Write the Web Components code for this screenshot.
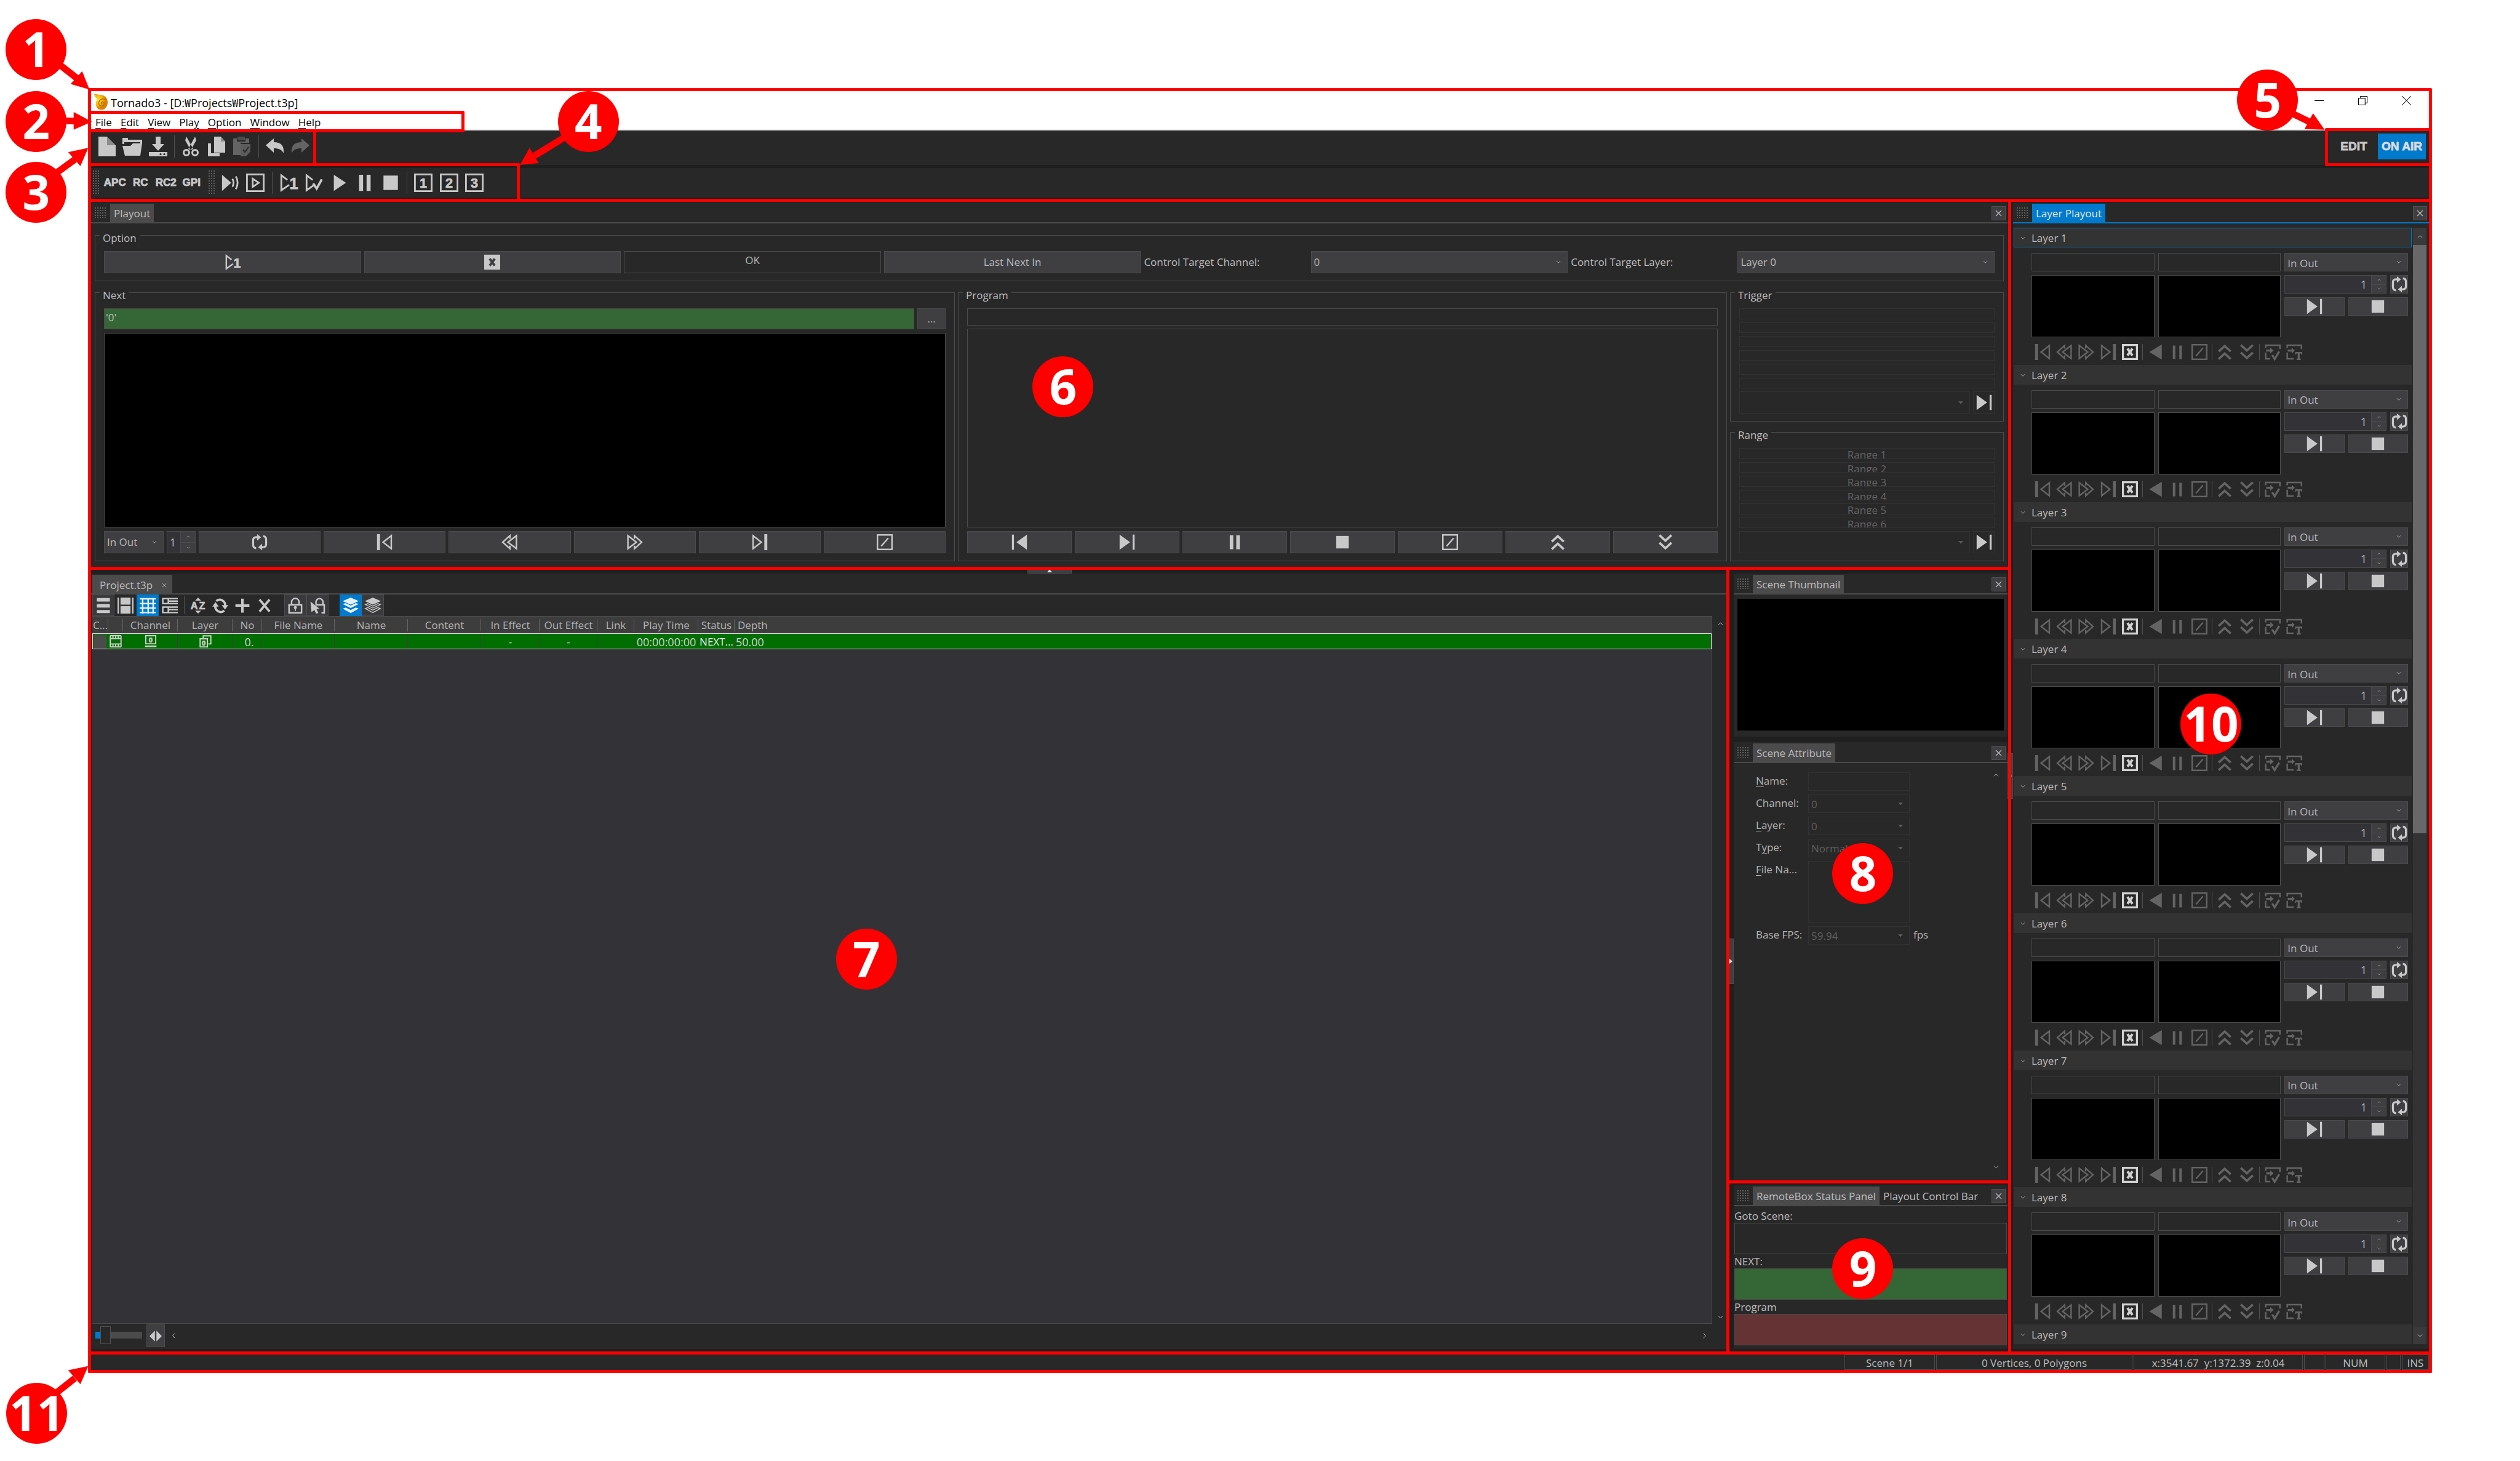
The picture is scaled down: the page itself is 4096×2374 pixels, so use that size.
<!DOCTYPE html>
<html lang="en">
<head>
<meta charset="utf-8">
<title>Tornado3</title>
<style>
  html, body { margin: 0; height: 100%; background: #fff; }
  body { font-family: "Open Sans", "Noto Sans CJK KR", sans-serif; font-size: 17px; line-height: 22px; }
  manual-page { height: 100%; }
</style>
</head>
<body>
<manual-page></manual-page>
<script>
const BASE = `
  *, *::before, *::after { box-sizing: border-box; }
  :host { display: block; box-sizing: border-box; min-width: 0; min-height: 0; }
  button, input, select, textarea { font: inherit; color: inherit; margin: 0; padding: 0; border: 0; background: none; border-radius: 0; outline: 0; min-width: 0; }
`;
function define(name, css, render) {
  customElements.define(name, class extends HTMLElement {
    constructor() {
      super();
      this.attachShadow({ mode: 'open' });
    }
    connectedCallback() {
      const html = typeof render === 'function' ? render(this) : render;
      this.shadowRoot.innerHTML = '<style>' + BASE + css + '</style>' + html;
    }
  });
}

/* ---------- icons, all on a 32 x 32 grid ---------- */
const num = (x, y, size, t) => `<text x="${x}" y="${y}" font-family="Liberation Sans" font-weight="700" font-size="${size}" text-anchor="middle" stroke="currentColor" stroke-width=".8">${t}</text>`;
const BOX = '<rect class="s" x="1.5" y="1.5" width="29" height="29"/>';
const PLAYOPEN = '<path class="s" d="M14 11L3.500 3V29L17 19.500"/>';
const STACK = 'M16 0L32 7L16 14L0 7z';
const ICONS = {
  new: '<path d="M2 0H16V14H30V32H2z"/><path fill="#8c8c8c" d="M16 0L30 14H16z"/>',
  open: '<path d="M0 2h9v3h23v7h-3V9H3v3H0z"/><path d="M0 15h13l4-4h15l-3 20H4z"/>',
  save: '<path d="M12 0h8v12h6L16 23L6 12h6z"/><path d="M1 25h30v7H1z"/><circle cx="20" cy="28.500" r="1.600" fill="#282828"/><circle cx="26" cy="28.500" r="1.600" fill="#282828"/>',
  cut: '<path d="M9 0L20 20L16 22L7 6zM23 0L12 20L16 22L25 6z"/><circle class="s" cx="9" cy="26" r="4.500"/><circle class="s" cx="23" cy="26" r="4.500"/>',
  copy: '<path d="M12 0h11l7 8v18H12z"/><path fill="#8c8c8c" d="M23 0l7 8h-7z"/><path d="M2 11h5v16h14v5H2z"/>',
  paste: '<path d="M2 3h6v5h14V3h6v7H14v20H2z"/><path d="M9 0h12v6H9z" opacity=".6"/><path d="M14 12h16v12l-7 8h-9z" opacity=".85"/><path class="s" style="stroke:#282828;stroke-width:2" d="M18 21l3 4l6-8"/>',
  undo: '<path d="M1 14L14 3v6c12 0 17 6 16 18c-3-6-8-8-16-8v7z"/>',
  redo: '<path d="M31 14L18 3v6C6 9 1 15 2 27c3-6 8-8 16-8v7z"/>',
  onairplay: '<path d="M2 2L18 16L2 30z"/><path class="s" d="M20 9q4 7 0 14M26 5q6 11 0 22"/>',
  boxplay: BOX + '<path class="s" d="M11.500 9L22 16L11.500 23z"/>',
  play1: PLAYOPEN + num(25, 27, 27, '1'),
  playcheck: PLAYOPEN + '<path class="s" style="stroke-width:4" d="M15 17l6 9L30 10"/>',
  play: '<path d="M6 2L27 16L6 30z"/>',
  pause: '<path d="M6 2h7v28H6zM19 2h7v28h-7z"/>',
  pausethin: '<path d="M7 3h5v27H7zM20 3h5v27h-5z"/>',
  stop: '<path d="M3.500 3.500h25v25h-25z"/>',
  box1: BOX + num(16, 24.500, 23, '1'),
  box2: BOX + num(16, 24.500, 23, '2'),
  box3: BOX + num(16, 24.500, 23, '3'),
  xfill: '<path d="M0 1h32v30H0z"/><path d="M11 9l10 14M21 9L11 23" stroke="#3f3f42" stroke-width="5"/>',
  xbox: '<rect class="s" style="stroke-width:4" x="2" y="2" width="28" height="28"/><path class="s" style="stroke-width:5" d="M11 9l10 14M21 9L11 23"/>',
  loop: '<path class="s" style="stroke-width:4" d="M9 28Q3 28 3 21V12Q3 6 9 6H12M23 4Q29 4 29 11V20Q29 26 23 26H20"/><path d="M11 0L19 6L11 13zM21 32L13 26L21 19z"/>',
  prevo: '<path d="M1 0h6v32H1z"/><path class="s" d="M29.500 3V29L13 16z"/>',
  nexto: '<path d="M25 0h6v32h-6z"/><path class="s" d="M2.500 3V29L19 16z"/>',
  rewo: '<path class="s" d="M17 9V3L2.500 16L17 29V23M30 3V29L13 16z"/>',
  fwdo: '<path class="s" d="M15 9V3L29.500 16L15 29V23M2 3V29L19 16z"/>',
  prevf: '<path d="M1 1h4v30H1zM31 1V31L10 16z"/>',
  nextf: '<path d="M27 1h4v30h-4zM1 1V31L22 16z"/>',
  back: '<path d="M28 1V31L3 16z"/>',
  slash: BOX + '<path class="s" d="M9 24L23 8"/>',
  up2: '<path class="s" style="stroke-width:4.500" d="M4 15L16 4L28 15M4 30L16 19L28 30"/>',
  down2: '<path class="s" style="stroke-width:4.500" d="M4 2L16 13L28 2M4 17L16 28L28 17"/>',
  incheck: '<path class="s" d="M30.500 10V2.500H2V8M2 17V29.500H11"/><path d="M3 11h8V7l7 6l-7 6v-4H3z"/><path class="s" style="stroke-width:4" d="M15 22l5 8L29 15"/>',
  intext: '<path class="s" d="M30.500 10V2.500H2V8M2 17V29.500H15"/><path d="M3 11h8V7l6 6l-6 6v-4H3z"/><path d="M18 16h14v5h-2v-2h-3v10h2v3h-8v-3h2V19h-3v2h-2z"/>',
  menu: '<path d="M3 1h26v7H3zM3 13h26v7H3zM3 25h26v6H3z"/>',
  film: '<path d="M0 0h3v32H0zM29 0h3v32h-3zM6 0h20v14H6zM6 17h20v15H6z"/>',
  grid: '<path class="s" d="M0 2.500H32M0 12H32M0 21H32M0 30H32M6 1V32M17 1V32M27 1V32"/>',
  details: '<path class="s" d="M32 2H2V12H32M13 2V12M13 7H32M32 19H2V30H32M13 19V30M13 24H32"/>',
  az: num(8, 23, 20, 'A') + num(24, 23, 20, 'Z') + '<path d="M16 0l6 6H10zM16 32l6-6H10z"/>',
  refresh: '<path class="s" style="stroke-width:4.500" d="M8 7A11 12 0 0 1 26 16M24 26A11 12 0 0 1 6 16"/><path d="M19 15h13L25.500 24zM0 18h13L6.500 9z"/>',
  plus: '<path d="M13.500 2h5v11.500H30v5H18.500V30h-5V18.500H2v-5H13.500z"/>',
  cross: '<path class="s" style="stroke-width:4.500" d="M6 4L26 28M26 4L6 28"/>',
  lock: '<path class="s" d="M3.500 14.500h25v16h-25zM8.500 14V9a7.500 7.500 0 0 1 15 0v5"/><circle cx="16" cy="20" r="3"/><path d="M15 20h2v7h-2z"/>',
  lockcur: '<path class="s" d="M12 14.500H29.500v16H24M13 13V9a7 7 0 0 1 14 0v5"/><path d="M2 8L20 22L14 23L18 31L13 32L10 25L4 29z"/>',
  layers: `<path d="${STACK}"/><path d="M0 13l6-2l10 5l10-5l6 2l-16 8zM0 22l6-2l10 5l10-5l6 2l-16 9z"/>`,
  layersoff: `<path d="${STACK}"/><path class="s" style="stroke-width:1.800" d="M6 12l-5 2l15 7l15-7l-5-2l-10 5zM6 20l-5 2l15 8l15-8l-5-2l-10 5z"/>`,
  strip: '<path class="s" d="M2 1v30M30 1v30M2 9H30M2 23H30"/><path stroke="currentColor" stroke-width="3" d="M9 1v7M16 1v7M23 1v7M9 24v7M16 24v7M23 24v7M2 1.500H30M2 30.500H30"/>',
  chan: '<path class="s" d="M3 1.500h26v21H3z"/><path d="M1 27h30v4H1z"/>' + num(16, 19, 18, '0'),
  lay: '<path class="s" d="M2 9.500h19v21H2zM10 8V2H30V23H23"/>' + num(11.500, 27, 18, '0'),
  chevdown: '<path class="s" style="stroke-width:3.500" d="M4 9L16 21L28 9"/>',
  chevup: '<path class="s" style="stroke-width:3.500" d="M4 22L16 10L28 22"/>',
  chevleft: '<path class="s" style="stroke-width:3.500" d="M22 2L9 16L22 30"/>',
  chevright: '<path class="s" style="stroke-width:3.500" d="M10 2L23 16L10 30"/>',
  tri: '<path d="M0 9h32L16 25z"/>',
  x: '<path class="s" style="stroke-width:3.500" d="M3 3L29 29M29 3L3 29"/>',
  fit: '<path d="M14 2V30L0 16zM18 2V30L32 16z"/>',
  min: '<path stroke="currentColor" stroke-width="2.200" d="M0 16H32"/>',
  restore: '<path class="s" style="stroke-width:2.200" d="M1 8h23v23H1zM8 8V1h23v23h-7"/>',
  close: '<path class="s" style="stroke-width:2.200" d="M0 0L32 32M32 0L0 32"/>'
};
define('ui-icon', `
  :host { display: inline-block; flex: none; width: 26px; height: 26px; }
  svg { display: block; width: 100%; height: 100%; fill: currentColor; overflow: visible; }
  .s { fill: none; stroke: currentColor; stroke-width: 3; }
`, el => `<svg viewBox="0 0 32 32" aria-hidden="true">${ICONS[el.getAttribute('name')] || ''}</svg>`);

/* ---------- small controls ---------- */
define('push-button', `
  :host { height: 36px; display: block; }
  button { width: 100%; height: 100%; display: flex; align-items: center; justify-content: center; background: #3f3f42; border: 1px solid #4b4b4d; color: #c8c8c8; overflow: hidden; }
  :host([text]) button { color: #b9b9b9; }
  :host([dark]) button { background: #282828; padding-bottom: 6px; }
  :host([ghost]) button { background: none; border-color: #323232; }
  :host([off]) button { background: none; border-color: #323232; color: #646464; align-items: flex-start; line-height: 19px; }
`, el => `<button ${el.hasAttribute('off') ? 'disabled' : ''} aria-label="${el.getAttribute('text') || el.getAttribute('icon') || 'item'}">${el.getAttribute('text') || (el.hasAttribute('icon') ? `<ui-icon name="${el.getAttribute('icon')}"></ui-icon>` : '')}</button>`);

define('combo-box', `
  :host { display: grid; height: 36px; color: #b9b9b9; }
  select, ui-icon { grid-area: 1 / 1; }
  select { appearance: none; width: 100%; height: 100%; padding: var(--text-drop, 0) 4px 0; background: #3f3f42; border: 1px solid #4b4b4d; opacity: 1; }
  ui-icon { width: 8px; height: 8px; justify-self: end; align-self: center; margin-right: 11px; pointer-events: none; }
  :host([off]) { color: #5f5f5f; }
  :host([off]) select { background: none; border-color: #323232; color: #5f5f5f; }
`, el => `<select aria-label="${el.getAttribute('label')}" ${el.hasAttribute('off') ? 'disabled' : ''}><option>${el.getAttribute('value') || ''}</option></select><ui-icon name="${el.hasAttribute('off') ? 'tri' : 'chevdown'}"></ui-icon>`);

define('spin-box', `
  :host { display: flex; height: 36px; border: 1px solid #4b4b4d; background: #333337; color: #b9b9b9; }
  input { flex: 1; width: 0; height: 100%; text-align: right; padding-right: 7px; appearance: textfield; font-size: 18px; }
  input::-webkit-inner-spin-button { display: none; }
  div { width: 24px; display: flex; flex-direction: column; background: #3f3f42; border-left: 1px solid #4b4b4d; }
  button { flex: 1; display: flex; align-items: center; justify-content: center; }
  button + button { border-top: 1px solid #4b4b4d; }
  ui-icon { width: 6px; height: 6px; }
`, `<input type="number" value="1" aria-label="Repeat count"><div><button aria-label="Up"><ui-icon name="chevup"></ui-icon></button><button aria-label="Down"><ui-icon name="chevdown"></ui-icon></button></div>`);

define('drag-grip', `
  :host { width: 20px; height: 17px; background-image: radial-gradient(circle at 1px 1px, #5f5f5f 0, #5f5f5f 1px, transparent 1px); background-size: 4px 4px; }
`, '');

/* ---------- panels ---------- */
define('dock-panel', `
  :host { display: flex; flex-direction: column; background: #282828; --line: #4b4b4b; }
  :host([active]) { --line: #007acc; }
  header { flex: none; height: 34px; display: flex; align-items: flex-end; border-bottom: 2px solid var(--line); padding: 0 3px 0 6px; color: #bebebe; }
  drag-grip { margin-right: 5px; align-self: center; }
  .tab { height: 30px; line-height: 28px; padding: 2px 6px 0; white-space: nowrap; }
  .tab.on { background: var(--line); }
  :host([active]) .tab.on { color: #e6e6e6; }
  .x { margin: 0 0 3px auto; width: 23px; height: 23px; background: #3f3f42; border: 1px solid #505052; display: flex; align-items: center; justify-content: center; }
  .x ui-icon { width: 11px; height: 11px; }
  main { flex: 1; min-height: 0; display: flex; flex-direction: column; }
`, el => `<header><drag-grip></drag-grip>${el.getAttribute('tabs').split('|').map((t, i) => `<button class="tab ${i ? '' : 'on'}">${t}</button>`).join('')}<button class="x" aria-label="Close"><ui-icon name="x"></ui-icon></button></header><main><slot></slot></main>`);

define('group-box', `
  :host { display: flex; color: #bebebe; }
  fieldset { flex: 1; min-width: 0; margin: 0; border: 1px solid #4b4b4b; padding: 12px 0; display: flex; flex-direction: column; }
  legend { margin-left: 7px; padding: 10px 5px 0; line-height: 18px; }
  .in { height: 100%; padding: 0 14px; display: flex; flex-direction: column; }
`, el => `<fieldset><legend>${el.getAttribute('caption')}</legend><div class="in"><slot></slot></div></fieldset>`);

define('playout-panel', `
  :host { flex: 1; display: flex; flex-direction: column; padding: 5px 6px 11px; color: #bebebe; }
  .opt { display: grid; grid-template-columns: repeat(4, 422fr) 269fr 422fr 269fr 422fr; gap: 5px; align-items: center; }
  .row { flex: 1; min-height: 0; margin-top: 4px; display: grid; grid-template-columns: 1398fr 1250fr 445fr; gap: 5px; }
  .screen { flex: 1; border: 1px solid #4b4b4b; }
  .black { background: #000; margin: 6px 0; }
  .line { display: flex; gap: 5px; }
  .line > .g { flex: 1; }
  input { width: 100%; background: none; border: 1px solid #4b4b4b; padding: 0 2px; }
  .next { background: #356635; height: 34px; padding-bottom: 6px; flex: 1; color: #b9c4b9; }
  .prog { height: 28px; margin-bottom: 5px; }
  .side { display: flex; flex-direction: column; gap: 3px; }
  .side > group-box { flex: 1; }
  .list { flex: 1; min-height: 0; display: flex; flex-direction: column; gap: 5px; margin-bottom: 5px; }
  .list push-button { flex: 1; height: auto; }
  label { white-space: nowrap; }
`, () => {
  const b = (icons) => icons.map(i => `<push-button class="g" icon="${i}"></push-button>`).join('');
  const side = (cap, txt) => `<group-box caption="${cap}"><div class="list">${[1,2,3,4,5,6].map(i => `<push-button off ${txt ? `text="Range ${i}"` : ''}></push-button>`).join('')}</div><div class="line"><combo-box class="g" off label="${cap}"></combo-box><push-button ghost icon="nextf" style="width:35px"></push-button></div></group-box>`;
  return `
  <group-box caption="Option"><div class="opt">
    <push-button icon="play1"></push-button><push-button icon="xfill"></push-button><push-button dark text="OK"></push-button><push-button text="Last Next In"></push-button>
    <label>Control Target Channel:</label><combo-box label="Control Target Channel" value="0"></combo-box>
    <label>Control Target Layer:</label><combo-box label="Control Target Layer" value="Layer 0"></combo-box>
  </div></group-box>
  <div class="row">
    <group-box caption="Next">
      <div class="line"><input class="next" value="'0'" aria-label="Next scene"><push-button text="..." style="width:46px;height:34px"></push-button></div>
      <div class="screen black"></div>
      <div class="line"><combo-box label="Effect" value="In Out" style="width:97px"></combo-box><spin-box style="width:47px"></spin-box>${b(['loop','prevo','rewo','fwdo','nexto','slash'])}</div>
    </group-box>
    <group-box caption="Program">
      <input class="prog" aria-label="Program scene">
      <div class="screen" style="margin-bottom:6px"></div>
      <div class="line">${b(['prevf','nextf','pause','stop','slash','up2','down2'])}</div>
    </group-box>
    <div class="side">${side('Trigger', false)}${side('Range', true)}</div>
  </div>`;
});

define('scene-table', `
  :host { flex: 1; background: #333337; border: 1px solid #4b4b4b; border-left: 0; margin-left: 2px; overflow: hidden; }
  table { width: 100%; border-collapse: separate; border-spacing: 0; table-layout: fixed; }
  th { font-weight: 400; color: #b4b4b4; background: #3d3d3d; height: 27px; padding: 2px 0 0; text-align: center; white-space: nowrap; overflow: hidden; border-bottom: 1px solid #4b4b4b; background-image: linear-gradient(#646464, #646464); background-size: 1px 20px; background-position: right 4px; background-repeat: no-repeat; }
  th:last-child, td:last-child { text-align: left; padding-left: 2px; }
  th:last-child { background-image: none; padding-left: 5px; }
  td { height: 26px; padding: 2px 0 0; line-height: 22px; font-size: 18px; color: #d2d2d2; background: #006e00; border: 1px solid #dcdcdc; border-width: 1px 0; text-align: center; white-space: nowrap; overflow: hidden; background-image: linear-gradient(#3d3d3d, #3d3d3d); background-size: 1px 100%; background-position: right; background-repeat: no-repeat; }
  td:last-child { border-right-width: 1px; background-image: none; }
  td:first-child { border-left-width: 1px; }
  td.t { font-size: 17px; color: #f0f0f0; }
  td ui-icon { width: 20px; height: 20px; display: block; margin: 0 auto 2px; }
  .sw { width: 21px; height: 22px; margin: -1px auto 0 1px; background: #4b4b4b; }
`, () => {
  const w = [26, 24, 89, 89, 48, 118, 119, 119, 95, 94, 60, 104, 59];
  const h = ['C...', '', 'Channel', 'Layer', 'No', 'File Name', 'Name', 'Content', 'In Effect', 'Out Effect', 'Link', 'Play Time', 'Status', 'Depth'];
  return `<table><colgroup>${w.map(n => `<col style="width:${n}px">`).join('')}<col></colgroup>
  <thead><tr>${h.map(t => `<th>${t}</th>`).join('')}</tr></thead>
  <tbody><tr><td><div class="sw"></div></td><td><ui-icon name="strip"></ui-icon></td><td><ui-icon name="chan"></ui-icon></td><td><ui-icon name="lay"></ui-icon></td><td style="padding-left:6px">0.</td><td></td><td></td><td></td><td>-</td><td>-</td><td></td><td>00:00:00:00</td><td class="t">NEXT...</td><td>50.00</td></tr></tbody></table>`;
});

define('document-pane', `
  :host { display: flex; flex-direction: column; background: #282828; color: #c8c8c8; }
  header { flex: none; height: 34px; display: flex; align-items: flex-end; padding-left: 2px; border-bottom: 2px solid #4b4b4b; }
  .tab { height: 30px; background: #4b4b4b; color: #bebebe; width: 130px; display: flex; align-items: center; justify-content: space-between; padding: 3px 9px 0 12px; }
  .tab ui-icon { width: 8px; height: 8px; }
  nav { flex: none; height: 35px; display: flex; padding-left: 2px; }
  nav button { width: 36px; height: 35px; display: flex; align-items: center; justify-content: center; }
  nav ui-icon { width: 26px; height: 26px; }
  nav .b { background: #3a3a3c; border: 1px solid #4b4b4d; }
  nav .on { background: #007acc; color: #e6f0fa; }
  nav i { border-left: 1px solid #505050; margin: 3px 0 3px 5px; flex: none; width: 5px; }
  .mid { flex: 1; min-height: 0; display: flex; }
  .vs { width: 26px; display: flex; flex-direction: column; align-items: center; justify-content: space-between; padding: 8px 0 6px; }
  .vs ui-icon, .hs ui-icon { width: 9px; height: 9px; }
  footer { flex: none; height: 41px; display: flex; align-items: flex-start; padding: 1px 34px 0 7px; }
  input { appearance: none; width: 76px; height: 30px; margin: 2px 7px 0 0; background: linear-gradient(90deg, #007acc 10px, #4b4b4b 10px) center / 100% 11px no-repeat; }
  input::-webkit-slider-thumb { appearance: none; width: 17px; height: 29px; background: #282828; border: 1px solid #505050; }
  footer button { width: 30px; height: 37px; background: #3f3f42; border: 1px solid #4b4b4d; display: flex; align-items: center; justify-content: center; }
  .hs { flex: 1; height: 37px; display: flex; align-items: center; justify-content: space-between; padding-left: 10px; }
  footer button ui-icon { width: 20px; height: 20px; }
`, () => {
  const b = (n, c = '') => `<button class="${c}" aria-label="${n}"><ui-icon name="${n}"></ui-icon></button>`;
  return `<header><button class="tab">Project.t3p<ui-icon name="x"></ui-icon></button></header>
  <nav>${b('menu','b')}${b('film')}${b('grid','on')}${b('details')}<i></i>${b('az')}${b('refresh')}${b('plus')}${b('cross')}<span style="width:14px"></span>${b('lock','b')}${b('lockcur','b')}<span style="width:18px"></span>${b('layers','on')}${b('layersoff','b')}</nav>
  <div class="mid"><scene-table></scene-table><div class="vs"><ui-icon name="chevup"></ui-icon><ui-icon name="chevdown"></ui-icon></div></div>
  <footer><input type="range" min="0" max="100" value="14" aria-label="Zoom"><button aria-label="Fit"><ui-icon name="fit"></ui-icon></button><div class="hs"><ui-icon name="chevleft"></ui-icon><ui-icon name="chevright"></ui-icon></div></footer>`;
});

define('attribute-form', `
  :host { flex: 1; display: flex; color: #b4b4b4; padding: 15px 14px 16px 36px; }
  form { flex: 1; display: grid; grid-template-columns: 79px 165px 1fr; grid-template-rows: 30px 30px 30px 30px 100px 30px; column-gap: 6px; row-gap: 6px; align-content: start; }
  label, .u { line-height: 28px; white-space: nowrap; }
  label { text-underline-offset: 3px; }
  input, textarea { border: 1px solid #323232; resize: none; }
  combo-box { height: 30px; --text-drop: 2px; }
  .u { grid-column: 3; }
  .c1 { grid-column: 1; }
  .c2 { grid-column: 2; }
  .sb { display: flex; flex-direction: column; justify-content: space-between; }
  .sb ui-icon { width: 9px; height: 9px; }
`, `<form>
  <label class="c1" for="n"><u>N</u>ame:</label><input class="c2" id="n" disabled>
  <label class="c1">Channel:</label><combo-box class="c2" off label="Channel" value="0"></combo-box>
  <label class="c1"><u>L</u>ayer:</label><combo-box class="c2" off label="Layer" value="0"></combo-box>
  <label class="c1">T<u>y</u>pe:</label><combo-box class="c2" off label="Type" value="Normal"></combo-box>
  <label class="c1" for="f"><u>F</u>ile Na...</label><textarea class="c2" id="f" disabled></textarea>
  <label class="c1">Base FPS:</label><combo-box class="c2" off label="Base FPS" value="59.94"></combo-box><span class="u">fps</span>
</form><div class="sb"><ui-icon name="chevup"></ui-icon><ui-icon name="chevdown"></ui-icon></div>`);

define('remote-status', `
  :host { flex: 1; display: flex; flex-direction: column; color: #bebebe; padding: 5px 1px; }
  label { line-height: 22px; height: 22px; }
  input { height: 52px; border: 1px solid #4b4b4b; margin-bottom: 1px; }
  .g { background: #356635; } .r { background: #653333; }
`, `<label for="a">Goto Scene:</label><input id="a"><label for="b">NEXT:</label><input id="b" class="g"><label for="c">Program</label><input id="c" class="r">`);

define('layer-section', `
  :host { flex: 1; color: #bebebe; }
  :host([last]) { flex: none; }
  header { height: 32px; background: #333; border: 1px solid #333; display: flex; align-items: center; padding: 2px 0 0 10px; }
  :host([active]) header { border-color: #007acc; }
  header ui-icon { width: 8px; height: 8px; margin-right: 10px; }
  .grid { display: grid; grid-template-columns: 200fr 200fr 201fr; grid-template-rows: 30px 30px 30px 29px; gap: 6px; padding: 9px 6px 0 29px; }
  input { border: 1px solid #4b4b4b; }
  .v { background: #000; border: 1px solid #4b4b4b; grid-row: 2 / 5; height: 101px; }
  .line { display: flex; gap: 6px; }
  .line > * { flex: 1; }
  combo-box, spin-box, push-button { height: 30px; --text-drop: 3px; }
  .ic { width: 445px; display: flex; margin: 8px 0 0 29px; color: #646464; height: 32px; align-items: center; }
  .ic button { flex: 1; display: flex; justify-content: center; }
  .ic .hot { color: #d2d2d2; }
  .ic i { width: 6px; height: 26px; background: linear-gradient(#505050, #505050) center / 1px 100% no-repeat; }
`, el => {
  const b = (n, c = '') => `<button class="${c}" aria-label="${n}"><ui-icon name="${n}"></ui-icon></button>`;
  const head = `<header><ui-icon name="chevdown"></ui-icon>${el.getAttribute('name')}</header>`;
  if (el.hasAttribute('last')) return head;
  return head + `<div class="grid"><input aria-label="Next name"><input aria-label="Program name"><combo-box label="Effect" value="In Out"></combo-box>
  <div class="v"></div><div class="v"></div>
  <div class="line"><spin-box></spin-box><push-button icon="loop" style="flex:none;width:29px"></push-button></div>
  <div class="line" style="grid-column:3"><push-button icon="nextf"></push-button><push-button icon="stop"></push-button></div></div>
  <div class="ic">${b('prevo')}${b('rewo')}${b('fwdo')}${b('nexto')}${b('xbox','hot')}<i></i>${b('back')}${b('pausethin')}${b('slash')}<i></i>${b('up2')}${b('down2')}<i></i>${b('incheck')}${b('intext')}</div>`;
});

define('layer-list', `
  :host { flex: 1; display: flex; padding: 7px 4px 8px 1px; }
  .l { flex: 1; display: flex; flex-direction: column; }
  .s { width: 22px; margin-left: 2px; background: #333; display: flex; flex-direction: column; color: #bebebe; }
  .s span { height: 28px; display: flex; align-items: center; justify-content: center; background: #3a3a3a; flex: none; }
  .s ui-icon { width: 9px; height: 9px; }
  .s b { height: 956px; background: #686868; margin-bottom: auto; }
`, () => `<div class="l">${[1,2,3,4,5,6,7,8,9].map(i => `<layer-section name="Layer ${i}" ${i === 1 ? 'active' : ''} ${i === 9 ? 'last' : ''}></layer-section>`).join('')}</div>
  <div class="s"><span><ui-icon name="chevup"></ui-icon></span><b></b><span><ui-icon name="chevdown"></ui-icon></span></div>`);

define('title-bar', `
  :host { height: 37px; background: #fff; color: #000; display: flex; align-items: center; padding-left: 4px; font-size: 18px; }
  svg { width: 23px; height: 28px; margin: 0 5px 4px 0; }
  .w { margin-left: auto; display: flex; gap: 56px; padding: 0 29px 7px 0; }
  .w ui-icon { width: 15px; height: 15px; }
  .w button { display: flex; }
`, `<svg viewBox="0 0 24 28"><defs><radialGradient id="g" cx=".35" cy=".4"><stop offset="0" stop-color="#ffe83a"/><stop offset=".6" stop-color="#f9b800"/><stop offset="1" stop-color="#d98200"/></radialGradient></defs><path d="M0 1L7 2L14 3C20 4 24 9 24 15C24 22 20 28 13 28C7 28 4 23 4 18C4 13 6 11 6 9L1 4L4 4z" fill="url(#g)"/><path d="M20 11C15 7 8 12 9 18C10 22 16 23 18 19C19 15 15 13 13 16C13 18 15 18 15 18" fill="none" stroke="#b86a00" stroke-width="1.500"/></svg>
<span>Tornado3 - [D:₩Projects₩Project.t3p]</span>
<div class="w"><button aria-label="Minimize"><ui-icon name="min"></ui-icon></button><button aria-label="Restore"><ui-icon name="restore"></ui-icon></button><button aria-label="Close"><ui-icon name="close"></ui-icon></button></div>`);

define('menu-bar', `
  :host { height: 27px; background: #fff; border-bottom: 2px solid #f0f0f0; color: #000; display: flex; align-items: center; gap: 14px; padding: 3px 0 0 7px; }
  button { text-underline-offset: 3px; }
`, ['<u>F</u>ile', '<u>E</u>dit', '<u>V</u>iew', 'Pla<u>y</u>', '<u>O</u>ption', '<u>W</u>indow', '<u>H</u>elp'].map(t => `<button>${t}</button>`).join(''));

const toolCss = `
  .t { display: flex; align-items: center; }
  .t button { flex: 1; display: flex; align-items: center; justify-content: center; height: 42px; }
  .t i { width: 12px; height: 36px; background: linear-gradient(#505050, #505050) center / 1px 100% no-repeat; }
`;
define('edit-bar', toolCss + `
  :host { height: 56px; background: #282828; color: #c8c8c8; display: flex; align-items: center; justify-content: space-between; padding: 0 5px 5px 5px; }
  .t { width: 356px; }
  .t ui-icon { width: 32px; height: 32px; }
  .off { color: #646464; }
  .m { display: flex; font: 700 19px/42px "Liberation Sans", sans-serif; }
  .m button { width: 78px; height: 42px; -webkit-text-stroke: .8px currentColor; }
  .m .on { background: #007acc; color: #dcdcdc; }
`, `<div class="t">${['new','open','save','|','cut','copy','paste.off','|','undo','redo.off'].map(n => n === '|' ? '<i></i>' : `<button class="${n.split('.')[1] || ''}" aria-label="${n.split('.')[0]}"><ui-icon name="${n.split('.')[0]}"></ui-icon></button>`).join('')}</div>
<div class="m"><button>EDIT</button><button class="on">ON AIR</button></div>`);

define('play-bar', toolCss + `
  :host { height: 48px; background: #282828; color: #c8c8c8; display: flex; align-items: center; padding-left: 3px; }
  drag-grip { width: 11px; height: 40px; }
  .a { width: 166px; margin: 0 7px 0 4px; font: 700 17px/20px "Liberation Sans Narrow", "Liberation Sans", sans-serif; }
  .a button { -webkit-text-stroke: .8px currentColor; }
  .b { width: 439px; margin-left: 3px; }
  .b ui-icon { width: 30px; height: 30px; }
`, `<drag-grip></drag-grip><div class="t a"><button>APC</button><button>RC</button><button>RC2</button><button>GPI</button></div>
<drag-grip></drag-grip><div class="t b">${['onairplay','boxplay','|','play1','playcheck','play','pause','stop','|','box1','box2','box3'].map(n => n === '|' ? '<i></i>' : `<button aria-label="${n}"><ui-icon name="${n}"></ui-icon></button>`).join('')}</div>`);

define('status-bar', `
  :host { height: 25px; background: #282828; color: #bebebe; display: flex; justify-content: flex-end; gap: 2px; }
  span { border: 1px solid #4b4b4b; height: 25px; line-height: 26px; text-align: center; white-space: nowrap; }
`, `<span style="width:147px">Scene 1/1</span><span style="width:319px">0 Vertices, 0 Polygons</span><span style="width:275px">x:3541.67&nbsp; y:1372.39&nbsp; z:0.04</span><span style="width:33px"></span><span style="width:97px">NUM</span><span style="width:23px"></span><span style="width:44px">INS</span>`);

define('split-handle', `
  :host { background: #3f3f42; border: 1px solid #4b4b4d; color: #e6e6e6; display: flex; align-items: center; justify-content: center; }
  i { width: 0; height: 0; border: 4px solid transparent; }
  :host([dir=up]) { width: 72px; height: 9px; } :host([dir=up]) i { border-top: 0; border-bottom: 5px solid; }
  :host([dir=side]) { width: 9px; height: 74px; } :host([dir=side]) i { border-right: 0; border-left: 5px solid; }
`, '<i></i>');

define('app-window', `
  :host { display: flex; flex-direction: column; background: #1f1f1f; }
  play-bar { margin-top: 5px; }
  .work { flex: 1; min-height: 0; margin: 8px 0 9px; display: grid; grid-template-columns: 1fr 9px 676px; }
  .left { display: grid; grid-template-rows: 594px 9px 1fr; min-height: 0; }
  .low { display: grid; grid-template-columns: 1fr 9px 445px; min-height: 0; }
  .docks { display: grid; grid-template-rows: 265px 1fr 266px; gap: 9px; min-height: 0; }
  .thumb { flex: 1; margin: 7px 6px 10px; background: #000; }
  .h { display: flex; align-items: center; justify-content: center; }
  .r { align-items: flex-start; padding-top: 895px; }
`, `<title-bar></title-bar><menu-bar></menu-bar><edit-bar></edit-bar><play-bar></play-bar>
<div class="work">
  <div class="left">
    <dock-panel tabs="Playout"><playout-panel></playout-panel></dock-panel>
    <div class="h"><split-handle dir="up"></split-handle></div>
    <div class="low">
      <document-pane></document-pane>
      <div class="h"><split-handle dir="side"></split-handle></div>
      <div class="docks">
        <dock-panel tabs="Scene Thumbnail"><div class="thumb"></div></dock-panel>
        <dock-panel tabs="Scene Attribute"><attribute-form></attribute-form></dock-panel>
        <dock-panel tabs="RemoteBox Status Panel|Playout Control Bar"><remote-status></remote-status></dock-panel>
      </div>
    </div>
  </div>
  <div class="h r"><split-handle dir="side"></split-handle></div>
  <dock-panel tabs="Layer Playout" active><layer-list></layer-list></dock-panel>
</div>
<status-bar></status-bar>`);

/* ---------- numbered callouts over the window ---------- */
define('callout-layer', `
  :host { position: absolute; inset: 0; pointer-events: none; }
  .f { position: absolute; border: 5px solid red; border-radius: 2px; }
  svg { position: absolute; inset: 0; width: 100%; height: 100%; fill: red; }
  .n { position: absolute; width: 99px; height: 99px; margin: -49px 0 0 -49px; border-radius: 50%; background: red; color: #fff; font-weight: 700; font-size: 78px; line-height: 97px; text-align: center; }
`, () => {
  const W = 4140, H = 2400, px = v => (v / W * 100) + '%', py = v => (v / H * 100) + '%';
  const frames = [[145,145,3995,2255],[145,182,763,217],[145,212,520,273],[145,268,854,332],[3820,210,3995,273],[145,327,3304,936],[145,931,2841,2225],[2836,931,3304,1944],[2836,1939,3304,2225],[3299,327,3995,2225],[145,2220,3995,2255]];
  const nums = [[59,81],[59,199],[59,315],[966,199],[3725,164],[1746,635],[1423,1575],[3060,1435],[3060,2084],[3632,1189],[60,2321]];
  const arrows = [
    [90,100,127,129,135,117,147,147,116,138],
    [100,198,123,199,121,184,151,200,121,213],
    [90,286,123,262,112,250,145,243,132,273],
    [935,221,878,256,870,243,854,271,885,268],
    [3755,181,3794,200,3800,186,3819,213,3786,212],
    [90,2290,123,2264,112,2251,145,2244,132,2274]];
  return frames.map(f => `<div class="f" style="left:${px(f[0])};top:${py(f[1])};width:${px(f[2]-f[0])};height:${py(f[3]-f[1])}"></div>`).join('')
    + `<svg viewBox="0 0 ${W} ${H}" preserveAspectRatio="none" aria-hidden="true">` + arrows.map(a => `<path d="M${a[0]} ${a[1]}L${a[2]} ${a[3]}" stroke="red" stroke-width="11"/><path d="M${a[4]} ${a[5]}L${a[6]} ${a[7]}L${a[8]} ${a[9]}z"/>`).join('') + '</svg>'
    + nums.map((n, i) => `<div class="n" style="left:${px(n[0])};top:${py(n[1])}">${i + 1}</div>`).join('');
});

define('manual-page', `
  :host { position: relative; padding: 148px; display: flex; overflow: hidden; }
  app-window { flex: 1; }
`, '<app-window></app-window><callout-layer></callout-layer>');
</script>
</body>
</html>
